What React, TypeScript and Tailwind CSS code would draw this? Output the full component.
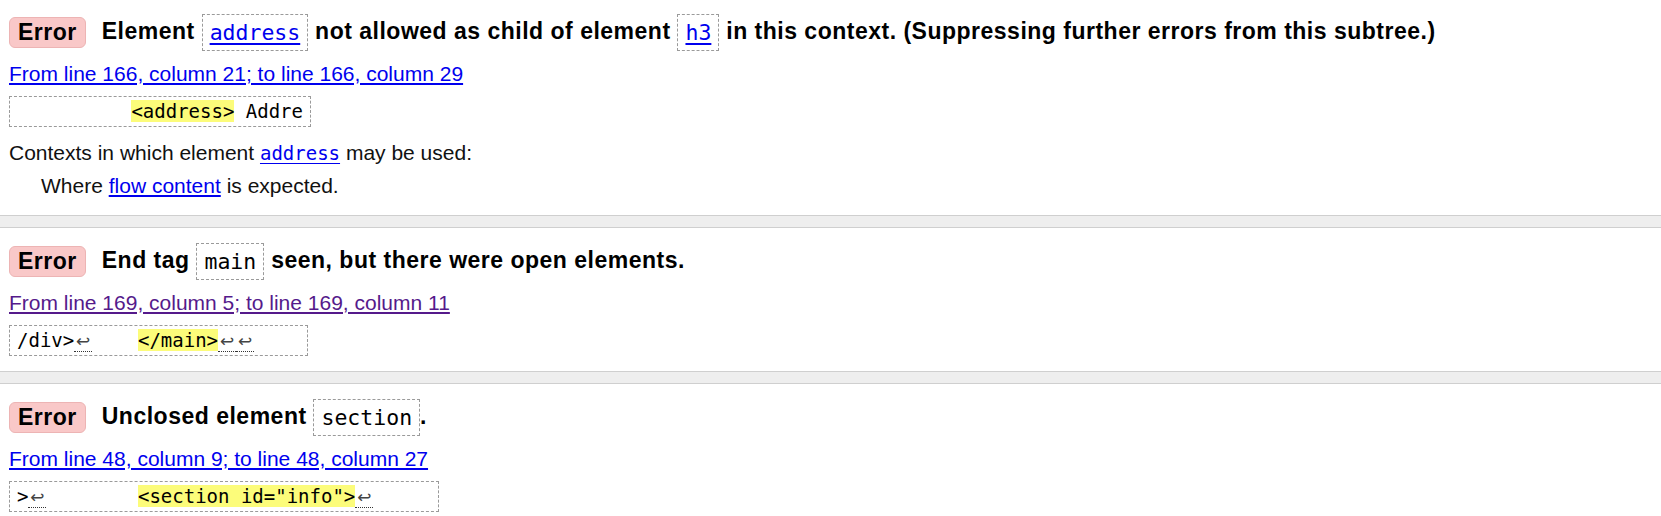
import React from "react";

const sans = "font-['Liberation_Sans',Arial,sans-serif]";
const mono = "font-['DejaVu_Sans_Mono',monospace]";

function Badge() {
  return (
    <span className="inline-flex items-center h-[31px] px-[8px] rounded-[6px] bg-[#f9c8c8] border border-[#edb4b4] text-[23px] tracking-[0.5px] font-bold text-black shrink-0">
      Error
    </span>
  );
}

function Box({ children, link }: { children: React.ReactNode; link?: boolean }) {
  return (
    <code
      className={`${mono} inline-block align-middle border border-dashed border-[#9a9a9a] px-[7px] leading-[35px] text-[21.5px] tracking-normal font-normal ${
        link ? "text-[#0000ee] underline underline-offset-[3px]" : "text-black"
      }`}
    >
      {children}
    </code>
  );
}

function LF() {
  return (
    <span className="inline-block w-[18px] text-center border-b border-dotted border-[#333] text-[#444] font-['DejaVu_Sans',sans-serif] text-[17px] leading-[20px]">
      ↩
    </span>
  );
}

function Hl({ children }: { children: React.ReactNode }) {
  return <span className="bg-[#fcfc7a]">{children}</span>;
}

function Extract({ children }: { children: React.ReactNode }) {
  return (
    <div className="mt-[10px]">
      <code
        className={`${mono} inline-block whitespace-pre border border-dashed border-[#9a9a9a] px-[7px] leading-[29px] text-[19px] text-black`}
      >
        {children}
      </code>
    </div>
  );
}

function Loc({ text, visited }: { text: string; visited?: boolean }) {
  return (
    <div className="mt-[11px] leading-[24px] text-[21px]">
      <a className={`underline underline-offset-[2px] ${visited ? "text-[#551a8b]" : "text-[#0000ee]"}`} href="#">
        {text}
      </a>
    </div>
  );
}

function Heading({ children }: { children: React.ReactNode }) {
  return (
    <div className="flex items-center h-[37px]">
      <Badge />
      <div className="ml-[16px] text-[23px] tracking-[0.5px] font-bold text-black whitespace-nowrap">{children}</div>
    </div>
  );
}

function Sep() {
  return <div className="h-[13px] bg-[#eeeeee] border-t border-b border-[#cfcfcf]" />;
}

export default function App() {
  return (
    <div className={`${sans} bg-white w-[1661px] h-[516px] overflow-hidden text-black`}>
      <div className="px-[9px] pt-[14px] pb-[17px]">
        <Heading>
          Element <Box link>address</Box> not allowed as child of element <Box link>h3</Box> in this context.
          (Suppressing further errors from this subtree.)
        </Heading>
        <Loc text="From line 166, column 21; to line 166, column 29" />
        <Extract>
          {"          "}
          <Hl>{"<address>"}</Hl>
          {" Addre"}
        </Extract>
        <div className="mt-[14px] text-[21px] leading-[24px] text-[#111]">
          Contexts in which element{" "}
          <a href="#" className={`${mono} text-[19px] text-[#0000ee] underline underline-offset-[3px]`}>
            address
          </a>{" "}
          may be used:
        </div>
        <div className="mt-[9px] ml-[32px] text-[21px] leading-[24px] text-[#111]">
          Where{" "}
          <a href="#" className="text-[#0000ee] underline underline-offset-[2px]">
            flow content
          </a>{" "}
          is expected.
        </div>
      </div>
      <Sep />
      <div className="px-[9px] pt-[15px] pb-[15px]">
        <Heading>
          End tag <Box>main</Box> seen, but there were open elements.
        </Heading>
        <Loc text="From line 169, column 5; to line 169, column 11" visited />
        <Extract>
          {"/div>"}
          <LF />
          {"    "}
          <Hl>{"</main>"}</Hl>
          <LF />
          <LF />
          {"    "}
        </Extract>
      </div>
      <Sep />
      <div className="px-[9px] pt-[15px] pb-[15px]">
        <Heading>
          Unclosed element <Box>section</Box>.
        </Heading>
        <Loc text="From line 48, column 9; to line 48, column 27" />
        <Extract>
          {">"}
          <LF />
          {"        "}
          <Hl>{'<section id="info">'}</Hl>
          <LF />
          {"     "}
        </Extract>
      </div>
    </div>
  );
}
